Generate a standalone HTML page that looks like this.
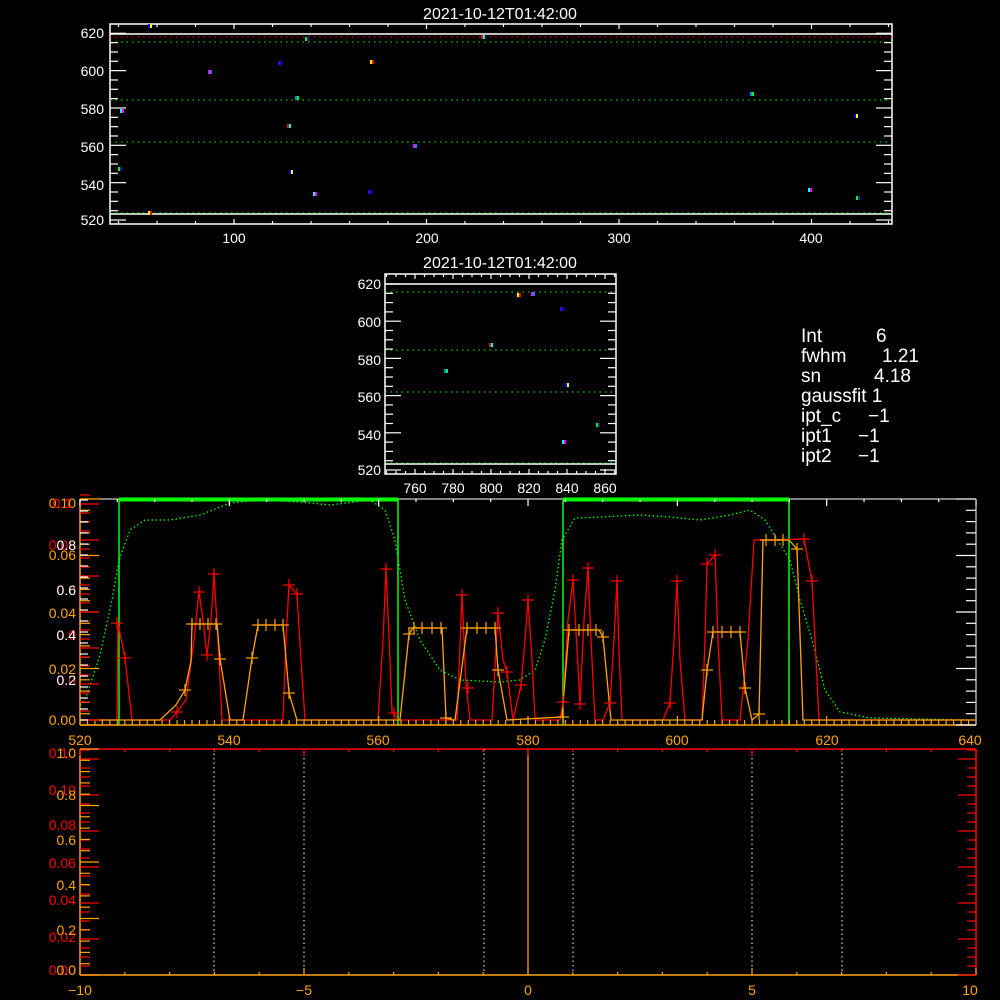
<!DOCTYPE html>
<html><head><meta charset="utf-8"><style>
html,body{margin:0;padding:0;background:#000;width:1000px;height:1000px;overflow:hidden}
svg{display:block}
text{font-family:"Liberation Sans",sans-serif}
</style></head><body>
<svg id="s" width="1000" height="1000" viewBox="0 0 1000 1000" xmlns="http://www.w3.org/2000/svg">
<rect width="1000" height="1000" fill="#000"/>
<g id="top">
<text x="500" y="19" fill="#fff" font-size="16" text-anchor="middle">2021-10-12T01:42:00</text>
<rect x="110" y="24" width="782" height="200" fill="none" stroke="#fff" stroke-width="1.5"/>
<line x1="110" y1="34" x2="892" y2="34" stroke="#fff" stroke-width="1.5"/>
<line x1="110" y1="214" x2="892" y2="214" stroke="#fff" stroke-width="1.5"/>
<line x1="110" y1="37" x2="892" y2="37" stroke="#f00" stroke-dasharray="1.5 4"/>
<line x1="110" y1="42" x2="892" y2="42" stroke="#0f0" stroke-dasharray="1.5 4"/>
<line x1="110" y1="100" x2="892" y2="100" stroke="#0f0" stroke-dasharray="1.5 4"/>
<line x1="110" y1="142" x2="892" y2="142" stroke="#0f0" stroke-dasharray="1.5 4"/>
<line x1="110" y1="213" x2="892" y2="213" stroke="#0f0" stroke-dasharray="1.5 4"/>
<g fill="#fff" font-size="14" text-anchor="end">
<text x="104" y="38">620</text><text x="104" y="76">600</text><text x="104" y="114">580</text><text x="104" y="152">560</text><text x="104" y="190">540</text><text x="104" y="225">520</text>
</g>
<g fill="#fff" font-size="14" text-anchor="middle">
<text x="234" y="243">100</text><text x="427" y="243">200</text><text x="619" y="243">300</text><text x="811" y="243">400</text>
</g>
</g>
<g>
<text x="500" y="268" fill="#fff" font-size="16" text-anchor="middle">2021-10-12T01:42:00</text>
<rect x="385" y="274" width="231" height="200" fill="none" stroke="#fff" stroke-width="1.5"/>
<line x1="385" y1="284" x2="616" y2="284" stroke="#fff" stroke-width="1.5"/>
<line x1="385" y1="464" x2="616" y2="464" stroke="#fff" stroke-width="1.5"/>
<line x1="385" y1="292" x2="616" y2="292" stroke="#0f0" stroke-dasharray="1.5 4"/>
<line x1="385" y1="350" x2="616" y2="350" stroke="#0f0" stroke-dasharray="1.5 4"/>
<line x1="385" y1="392" x2="616" y2="392" stroke="#0f0" stroke-dasharray="1.5 4"/>
<line x1="385" y1="463" x2="616" y2="463" stroke="#0f0" stroke-dasharray="1.5 4"/>
<g fill="#fff" font-size="14" text-anchor="end">
<text x="381" y="289">620</text><text x="381" y="327">600</text><text x="381" y="365">580</text><text x="381" y="402">560</text><text x="381" y="440">540</text><text x="381" y="475">520</text>
</g>
<g fill="#fff" font-size="14" text-anchor="middle">
<text x="415" y="493">760</text><text x="453" y="493">780</text><text x="491" y="493">800</text><text x="529" y="493">820</text><text x="567" y="493">840</text><text x="605" y="493">860</text>
</g>
<g fill="#fff" font-size="19">
<text x="801" y="342">Int</text><text x="876" y="342">6</text>
<text x="801" y="362">fwhm</text><text x="882" y="362">1.21</text>
<text x="801" y="382">sn</text><text x="874" y="382">4.18</text>
<text x="801" y="402">gaussfit 1</text>
<text x="801" y="422">ipt_c</text><text x="868" y="422">−1</text>
<text x="801" y="442">ipt1</text><text x="858" y="442">−1</text>
<text x="801" y="462">ipt2</text><text x="858" y="462">−1</text>
</g>
</g>
<g>
<line x1="80" y1="499" x2="976" y2="499" stroke="#fff"/>
<line x1="976" y1="499" x2="976" y2="725" stroke="#fff"/>
<polyline fill="none" stroke="#0f0" stroke-width="1.3" stroke-dasharray="1.5 2.5" points="80,705 85,700 100,655 112,600 119,560 130,530 145,520 170,520 200,515 230,503 260,500 300,502 330,505 370,500 385,510 395,540 405,600 420,640 440,670 460,680 500,682 520,680 535,670 545,640 555,590 562,540 575,518 600,517 640,515 670,517 700,520 730,515 750,510 765,520 790,560 800,600 812,640 825,690 840,712 870,718 976,720"/>
<g stroke="#0f0" stroke-width="1.5" fill="none">
<line x1="119" y1="499" x2="119" y2="725"/><line x1="398" y1="499" x2="398" y2="725"/>
<line x1="563" y1="499" x2="563" y2="725"/><line x1="789" y1="499" x2="789" y2="725"/>
</g>
<line x1="119" y1="499.5" x2="398" y2="499.5" stroke="#0f0" stroke-width="4"/>
<line x1="563" y1="499.5" x2="789" y2="499.5" stroke="#0f0" stroke-width="4"/>
<polyline fill="none" stroke="#f00" stroke-width="1.3" points="80,720 117,720 118,623 125,658 132,720 170,720 177,712 186,700 194,640 199,592 203,620 207,655 211,620 214,574 218,640 222,720 283,720 286,640 289,585 297,594 301,660 305,720 378,720 383,640 386,569 390,660 392,712 394,713 398,720 457,720 462,595 466,684 470,720 492,720 498,613 503,660 507,672 513,720 521,685 525,640 528,600 532,660 535,720 560,720 563,702 568,620 573,580 577,650 580,704 584,620 588,568 591,640 595,720 603,720 610,703 614,640 617,581 619,650 622,720 663,720 670,703 674,640 677,581 680,660 685,720 702,720 705,640 707,564 715,555 718,640 722,720 740,720 748,640 754,540 804,539 808,560 812,581 816,660 819,720 976,720"/>
<polyline fill="none" stroke="#ffa500" stroke-width="1.3" points="80,720 160,720 176,705 185,690 191,661 192,624 217,624 220,659 230,720 243,720 252,658 258,625 283,625 289,693 297,720 400,720 409,634 413,628 442,628 446,718 453,720 455,720 467,628 495,628 498,670 507,720 562,717 569,630 599,630 603,637 611,720 702,720 707,670 713,632 740,632 745,688 752,720 759,714 763,540 789,540 797,549 803,720 976,720"/>
<line x1="80" y1="499" x2="80" y2="725" stroke="#ffa500" stroke-width="1.5"/>
<line x1="80" y1="725" x2="976" y2="725" stroke="#ffa500" stroke-width="1.5"/>
<g fill="#ffa500" font-size="14" text-anchor="end">
<text x="76" y="508">0.10</text><text x="76" y="560">0.06</text><text x="76" y="618">0.04</text><text x="76" y="674">0.02</text><text x="76" y="725">0.00</text>
</g>
<g fill="#f00" font-size="14" text-anchor="end">
<text x="72" y="508">0.1</text><text x="76" y="550">0.08</text><text x="76" y="595">0.0</text><text x="76" y="640">0.0</text><text x="76" y="685">0.0</text>
</g>
<g fill="#fff" font-size="14" text-anchor="end">
<text x="76" y="550">0.8</text><text x="76" y="595">0.6</text><text x="76" y="640">0.4</text><text x="76" y="685">0.2</text>
</g>
<g fill="#ffa500" font-size="14" text-anchor="middle">
<text x="80" y="745">520</text><text x="229" y="745">540</text><text x="378" y="745">560</text><text x="528" y="745">580</text><text x="677" y="745">600</text><text x="827" y="745">620</text><text x="970" y="745">640</text>
</g>
</g>
<g>
<line x1="80" y1="749" x2="976" y2="749" stroke="#f00" stroke-width="1.5"/>
<line x1="976" y1="749" x2="976" y2="975" stroke="#f00" stroke-width="1.5"/>
<g stroke="#fff" stroke-dasharray="1.5 3">
<line x1="214" y1="749" x2="214" y2="975"/><line x1="304" y1="749" x2="304" y2="975"/>
<line x1="484" y1="749" x2="484" y2="975"/><line x1="573" y1="749" x2="573" y2="975"/>
<line x1="752" y1="749" x2="752" y2="975"/><line x1="842" y1="749" x2="842" y2="975"/>
</g>
<line x1="528" y1="749" x2="528" y2="975" stroke="#ffa500" stroke-width="1.3"/>
<line x1="80" y1="749" x2="80" y2="975" stroke="#ffa500" stroke-width="1.5"/>
<line x1="80" y1="975" x2="976" y2="975" stroke="#ffa500" stroke-width="1.5"/>
<g fill="#f00" font-size="14" text-anchor="end">
<text x="76" y="758">0.10</text><text x="76" y="795">0.10</text><text x="76" y="830">0.08</text><text x="76" y="868">0.06</text><text x="76" y="905">0.04</text><text x="76" y="942">0.02</text><text x="76" y="975">0.00</text>
</g>
<g fill="#ffa500" font-size="14" text-anchor="end">
<text x="76" y="758">1.0</text><text x="76" y="800">0.8</text><text x="76" y="845">0.6</text><text x="76" y="890">0.4</text><text x="76" y="935">0.2</text><text x="76" y="975">0.0</text>
</g>
<g fill="#ffa500" font-size="14" text-anchor="middle">
<text x="80" y="995">−10</text><text x="304" y="995">−5</text><text x="528" y="995">0</text><text x="752" y="995">5</text><text x="970" y="995">10</text>
</g>
</g>
<g id="ticks"></g>
<g id="pts"></g>
</svg>
<script>
var NS="http://www.w3.org/2000/svg",T=document.getElementById("ticks");
function L(x1,y1,x2,y2,c,w){var l=document.createElementNS(NS,"line");l.setAttribute("x1",x1);l.setAttribute("y1",y1);l.setAttribute("x2",x2);l.setAttribute("y2",y2);l.setAttribute("stroke",c);l.setAttribute("stroke-width",w||1.2);T.appendChild(l);}
for(var v=40;v<=440;v+=20){var x=41.5+v*1.925;if(x<111||x>891)continue;var big=v%100==0;L(x,224,x,big?219:221,"#fff");L(x,24,x,big?29:27,"#fff");}
for(var v=520;v<=620;v+=5){var y=220-(v-520)*1.867;var big=v%20==0;L(110,y,big?126:118,y,"#fff");L(892,y,big?876:884,y,"#fff");}
for(var v=745;v<=865;v+=5){var x=415+(v-760)*1.9;if(x<386||x>615)continue;var big=v%20==0;L(x,474,x,big?469:471,"#fff");L(x,274,x,big?279:277,"#fff");}
for(var v=520;v<=620;v+=5){var y=470-(v-520)*1.86;var big=v%20==0;L(385,y,big?401:393,y,"#fff");L(616,y,big?600:608,y,"#fff");}
for(var v=521;v<640;v++){var x=80+(v-520)*7.467;L(x,725,x,v%20==0?716:720,"#ffa500");}
for(var v=520;v<=640;v+=5){var x=80+(v-520)*7.467;L(x,499,x,v%20==0?506:502,"#fff");}
for(var i=0;i<=20;i++){var y=725-i*11.3;L(976,y,i%5==0?956:966,y,"#fff");L(80,y,i%5==0?99:90,y,"#ffa500");}
for(var i=0;i<=25;i++){var y=720-i*9;L(80,y,i%4==0?99:90,y,"#f00");}
for(var i=0;i<=20;i++){var y=720-i*11;L(80,y,88,y,"#fff");}
for(var v=-10;v<=10;v+=1){var x=528+v*44.8;L(x,975,x,v%5==0?968:972,"#ffa500");L(x,749,x,v%5==0?756:752,"#f00");}
for(var i=0;i<=25;i++){var y=975-i*9;L(976,y,i%4==0?958:967,y,"#f00");L(80,y,i%4==0?99:90,y,"#f00");}
for(var i=0;i<=20;i++){var y=975-i*11.3;L(80,y,i%5==0?99:90,y,"#ffa500");}
function X(pts,c){for(var i=0;i<pts.length;i+=2){L(pts[i]-6,pts[i+1],pts[i]+6,pts[i+1],c);L(pts[i],pts[i+1]-6,pts[i],pts[i+1]+6,c);}}
X([117,623,125,658,177,712,199,592,207,655,214,574,289,585,297,594,386,569,394,713,462,595,468,688,498,613,507,672,528,600,521,685,563,702,573,580,580,704,588,568,610,703,617,581,670,703,677,581,707,564,715,555,804,539,812,581],"#f00");
X([185,690,192,624,200,624,208,624,216,624,220,659,252,658,258,625,266,625,275,625,283,625,289,693,409,634,414,628,422,628,432,628,441,628,446,718,467,628,477,628,486,628,495,628,498,670,563,717,569,630,579,630,588,630,596,630,603,637,707,670,713,632,722,632,731,632,740,632,745,688,759,714,766,540,775,540,783,540,797,549],"#ffa500");
var cols=["#00f","#0ff","#0f0","#ff0","#f0f","#50a","#f00","#08f"];
var P=document.getElementById("pts");
var sp=[150,26,122,111,120,169,150,213,210,72,280,63,289,126,297,98,291,172,315,194,307,39,372,62,415,146,370,192,483,37,752,94,856,116,810,190,858,198,519,295,533,294,562,309,491,345,446,371,567,385,564,442,598,425];
for(var i=0;i<sp.length;i+=2){for(var k=0;k<2;k++){var r=document.createElementNS(NS,"rect");r.setAttribute("x",sp[i]-2+k*2);r.setAttribute("y",sp[i+1]-2);r.setAttribute("width",2);r.setAttribute("height",4);r.setAttribute("fill",cols[(i/2+k*3)%8]);P.appendChild(r);}}
</script>
</body></html>
